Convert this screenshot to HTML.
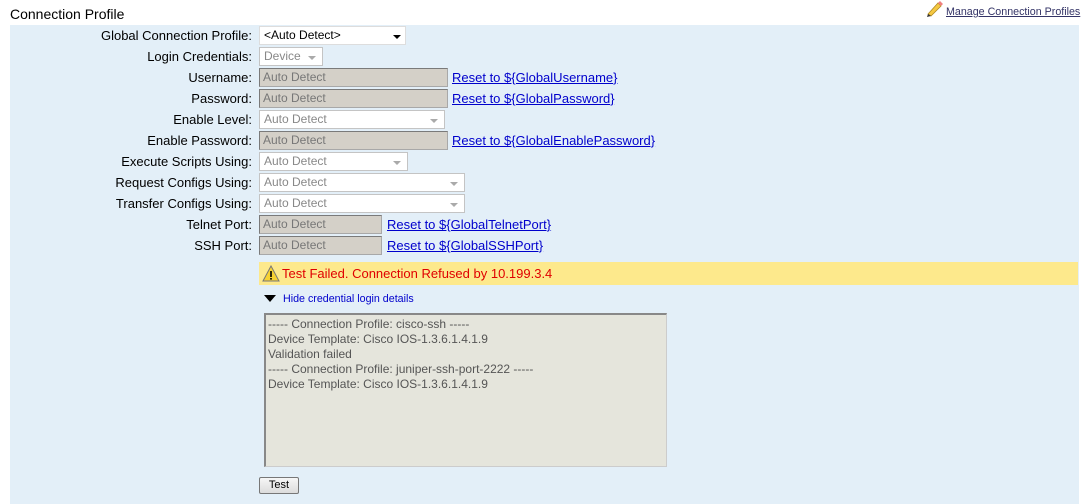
<!DOCTYPE html>
<html><head><style>
body{margin:0;width:1091px;height:504px;background:#fff;font-family:"Liberation Sans",Arial,sans-serif;font-size:12px;position:relative;overflow:hidden;color:#000}
.a{position:absolute}
.title{left:10px;top:6px;font-size:14px}
.panel{left:10px;top:25px;width:1069px;height:479px;background:#e3eff8}
.lbl{right:839px;text-align:right;white-space:nowrap;line-height:19px;font-size:13px}
.inp{line-height:17px;background:#d4d0c8;border:1px solid #a8a8a8;border-top-color:#7a7a7a;border-left-color:#7a7a7a;color:#777;padding-left:3px;box-sizing:border-box;height:19px}
.sel{height:19px;line-height:17px;background:#fff;border:1px solid #c4c4c4;color:#888;padding-left:4px;box-sizing:border-box}
.sel::after{content:"";position:absolute;right:6px;top:8px;border:4px solid transparent;border-top:4px solid #aaa;border-bottom:0}
.sel.g::after{display:none}
.lnk{color:#00c;text-decoration:underline;line-height:19px;font-size:13px}
</style></head><body>
<div class="a title">Connection Profile</div>
<svg class="a" style="left:925px;top:0" width="18" height="17" viewBox="0 0 18 17"><path d="M3 14 L13 3 L16 6 L6 16 Z" fill="#f5c842" stroke="#b08a20" stroke-width="0.8"/><path d="M13 3 L15 1 L18 4 L16 6Z" fill="#f08080"/><path d="M3 14 L2 17 L6 16Z" fill="#333"/></svg>
<div class="a lnk" style="left:946px;top:3px;font-size:10.7px;color:#336;line-height:18px">Manage Connection Profiles</div>
<div class="a panel"></div>

<div class="a lbl" style="top:26px">Global Connection Profile:</div>
<div class="a sel g" style="left:259px;top:26px;width:147px;color:#000;border-color:#ddd">&lt;Auto Detect&gt;<span class="a" style="right:4px;top:8px;border:4px solid transparent;border-top:4px solid #000;border-bottom:0"></span></div>

<div class="a lbl" style="top:47px">Login Credentials:</div>
<div class="a sel" style="left:259px;top:47px;width:64px">Device</div>

<div class="a lbl" style="top:68px">Username:</div>
<div class="a inp" style="left:259px;top:68px;width:189px">Auto Detect</div>
<div class="a lnk" style="left:452px;top:68px">Reset to ${GlobalUsername}</div>

<div class="a lbl" style="top:89px">Password:</div>
<div class="a inp" style="left:259px;top:89px;width:189px">Auto Detect</div>
<div class="a lnk" style="left:452px;top:89px">Reset to ${GlobalPassword}</div>

<div class="a lbl" style="top:110px">Enable Level:</div>
<div class="a sel" style="left:259px;top:110px;width:186px">Auto Detect</div>

<div class="a lbl" style="top:131px">Enable Password:</div>
<div class="a inp" style="left:259px;top:131px;width:189px">Auto Detect</div>
<div class="a lnk" style="left:452px;top:131px">Reset to ${GlobalEnablePassword}</div>

<div class="a lbl" style="top:152px">Execute Scripts Using:</div>
<div class="a sel" style="left:259px;top:152px;width:149px">Auto Detect</div>

<div class="a lbl" style="top:173px">Request Configs Using:</div>
<div class="a sel" style="left:259px;top:173px;width:206px">Auto Detect</div>

<div class="a lbl" style="top:194px">Transfer Configs Using:</div>
<div class="a sel" style="left:259px;top:194px;width:206px">Auto Detect</div>

<div class="a lbl" style="top:215px">Telnet Port:</div>
<div class="a inp" style="left:259px;top:215px;width:123px">Auto Detect</div>
<div class="a lnk" style="left:387px;top:215px">Reset to ${GlobalTelnetPort}</div>

<div class="a lbl" style="top:236px">SSH Port:</div>
<div class="a inp" style="left:259px;top:236px;width:123px">Auto Detect</div>
<div class="a lnk" style="left:387px;top:236px">Reset to ${GlobalSSHPort}</div>

<div class="a" style="left:259px;top:262px;width:819px;height:23px;background:#fde98c"></div>
<svg class="a" style="left:262px;top:265px" width="18" height="17" viewBox="0 0 18 17"><path d="M9 1 L17 16 L1 16 Z" fill="#f7d232" stroke="#777" stroke-width="1"/><rect x="8.2" y="6" width="1.6" height="6" fill="#000"/><rect x="8.2" y="13" width="1.6" height="1.6" fill="#000"/></svg>
<div class="a" style="left:282px;top:264px;line-height:19px;font-size:13px;color:#e00000">Test Failed. Connection Refused by 10.199.3.4</div>

<div class="a" style="left:264px;top:295px;border:6px solid transparent;border-top:7px solid #000;border-bottom:0"></div>
<div class="a" style="left:283px;top:292px;font-size:10.7px;color:#00c;line-height:14px">Hide credential login details</div>

<div class="a" style="left:264px;top:313px;width:403px;height:154px;background:#e5e5dc;border:1px solid #ccc;border-top:2px solid #888;border-left:2px solid #888;box-sizing:border-box;color:#555;line-height:15px;padding:2px 0 0 2px">----- Connection Profile: cisco-ssh -----<br>Device Template: Cisco IOS-1.3.6.1.4.1.9<br>Validation failed<br>----- Connection Profile: juniper-ssh-port-2222 -----<br>Device Template: Cisco IOS-1.3.6.1.4.1.9</div>

<div class="a" style="left:259px;top:477px;width:40px;height:17px;box-sizing:border-box;border:1px solid #777;border-radius:2px;background:linear-gradient(#f6f6f6,#dcdcdc);font-size:11px;text-align:center;line-height:15px">Test</div>
</body></html>
